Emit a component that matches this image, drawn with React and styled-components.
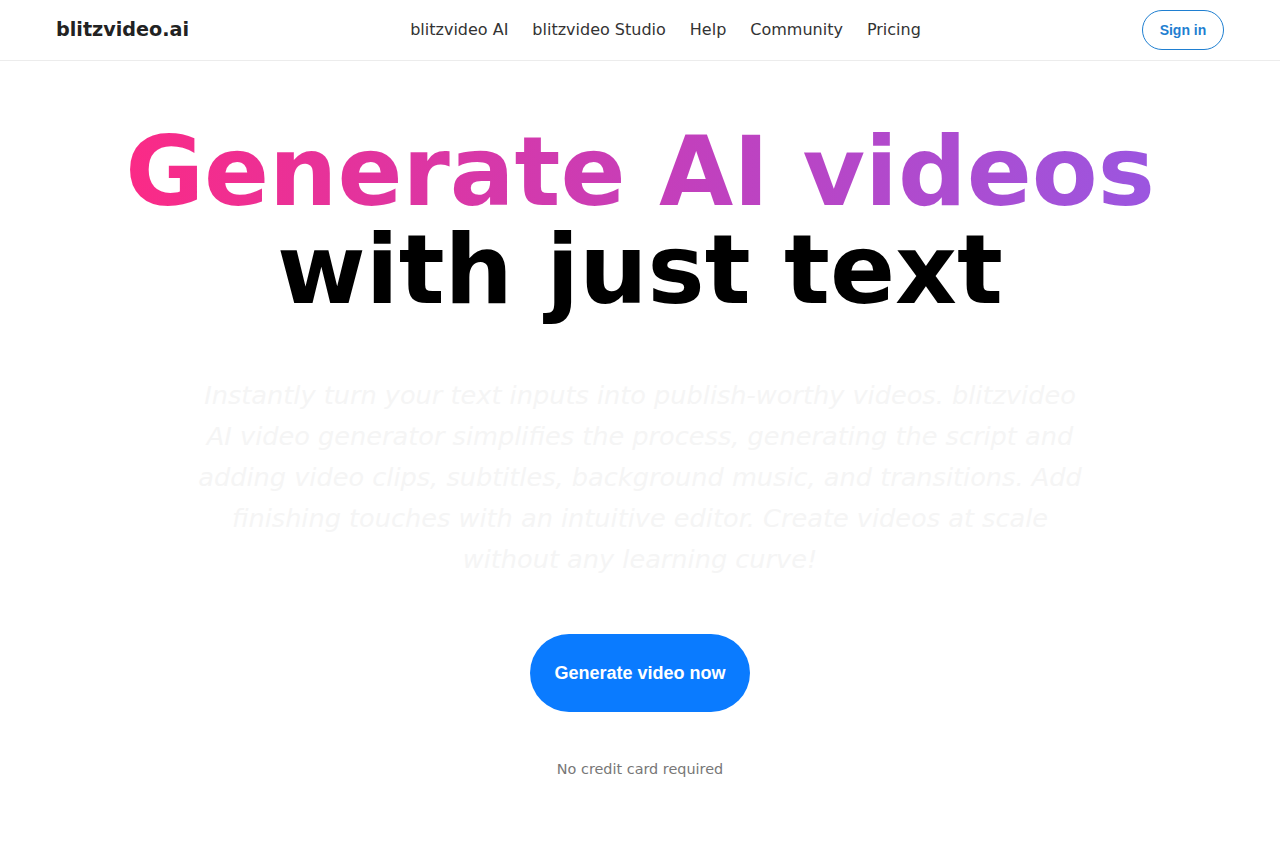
import React from "react";
import styled, { createGlobalStyle } from "styled-components";

const GlobalStyle = createGlobalStyle`
  html, body {
    margin: 0;
    padding: 0;
    background: #fff;
    font-family: "DejaVu Sans", sans-serif;
  }
`;

const Header = styled.header`
  height: 60px;
  border-bottom: 1px solid #ececec;
  display: flex;
  align-items: center;
  justify-content: space-between;
  padding: 0 56px;
`;

const Logo = styled.a`
  font-size: 19.2px;
  font-weight: bold;
  color: #222;
  text-decoration: none;
  margin-top: -2px;
`;

const Nav = styled.nav`
  display: flex;
  gap: 24px;
  margin-top: -2px;
`;

const NavLink = styled.a`
  font-size: 16px;
  color: #333;
  text-decoration: none;
  white-space: nowrap;
`;

const SignIn = styled.button`
  width: 82px;
  height: 40px;
  border: 1px solid #1f7fd1;
  border-radius: 20px;
  background: #fff;
  color: #1f7fd1;
  font-family: "Liberation Sans", Arial, sans-serif;
  font-weight: bold;
  font-size: 14px;
  cursor: pointer;
`;

const Hero = styled.main`
  display: flex;
  flex-direction: column;
  align-items: center;
  padding-top: 62px;
`;

const Title = styled.h1`
  margin: 0;
  text-align: center;
  font-size: 96px;
  line-height: 98px;
  font-weight: bold;
`;

const Gradient = styled.span`
  display: inline-block;
  background: linear-gradient(90deg, #fb2a86 0%, #c240bd 55%, #9b56e0 100%);
  -webkit-background-clip: text;
  background-clip: text;
  color: transparent;
`;

const Plain = styled.span`
  display: block;
  color: #000;
`;

const Lead = styled.p`
  margin: 56px 0 0;
  max-width: 900px;
  text-align: center;
  font-style: italic;
  font-size: 25.6px;
  line-height: 41px;
  color: #f5f5f5;
`;

const Cta = styled.button`
  margin-top: 54px;
  width: 220px;
  height: 78px;
  border: none;
  border-radius: 39px;
  background: #0a7bff;
  color: #fff;
  font-family: "Liberation Sans", Arial, sans-serif;
  font-weight: bold;
  font-size: 18px;
  cursor: pointer;
`;

const Note = styled.p`
  margin: 49px 0 0;
  font-size: 14.4px;
  color: #777;
`;

const links = ["blitzvideo AI", "blitzvideo Studio", "Help", "Community", "Pricing"];

export default function App() {
  return (
    <>
      <GlobalStyle />
      <Header>
        <Logo href="#">blitzvideo.ai</Logo>
        <Nav>
          {links.map((l) => (
            <NavLink key={l} href="#">{l}</NavLink>
          ))}
        </Nav>
        <SignIn>Sign in</SignIn>
      </Header>
      <Hero>
        <Title>
          <Gradient>Generate AI videos</Gradient>
          <Plain>with just text</Plain>
        </Title>
        <Lead>
          Instantly turn your text inputs into publish-worthy videos. blitzvideo
          AI video generator simplifies the process, generating the script and
          adding video clips, subtitles, background music, and transitions. Add
          finishing touches with an intuitive editor. Create videos at scale
          without any learning curve!
        </Lead>
        <Cta>Generate video now</Cta>
        <Note>No credit card required</Note>
      </Hero>
    </>
  );
}
